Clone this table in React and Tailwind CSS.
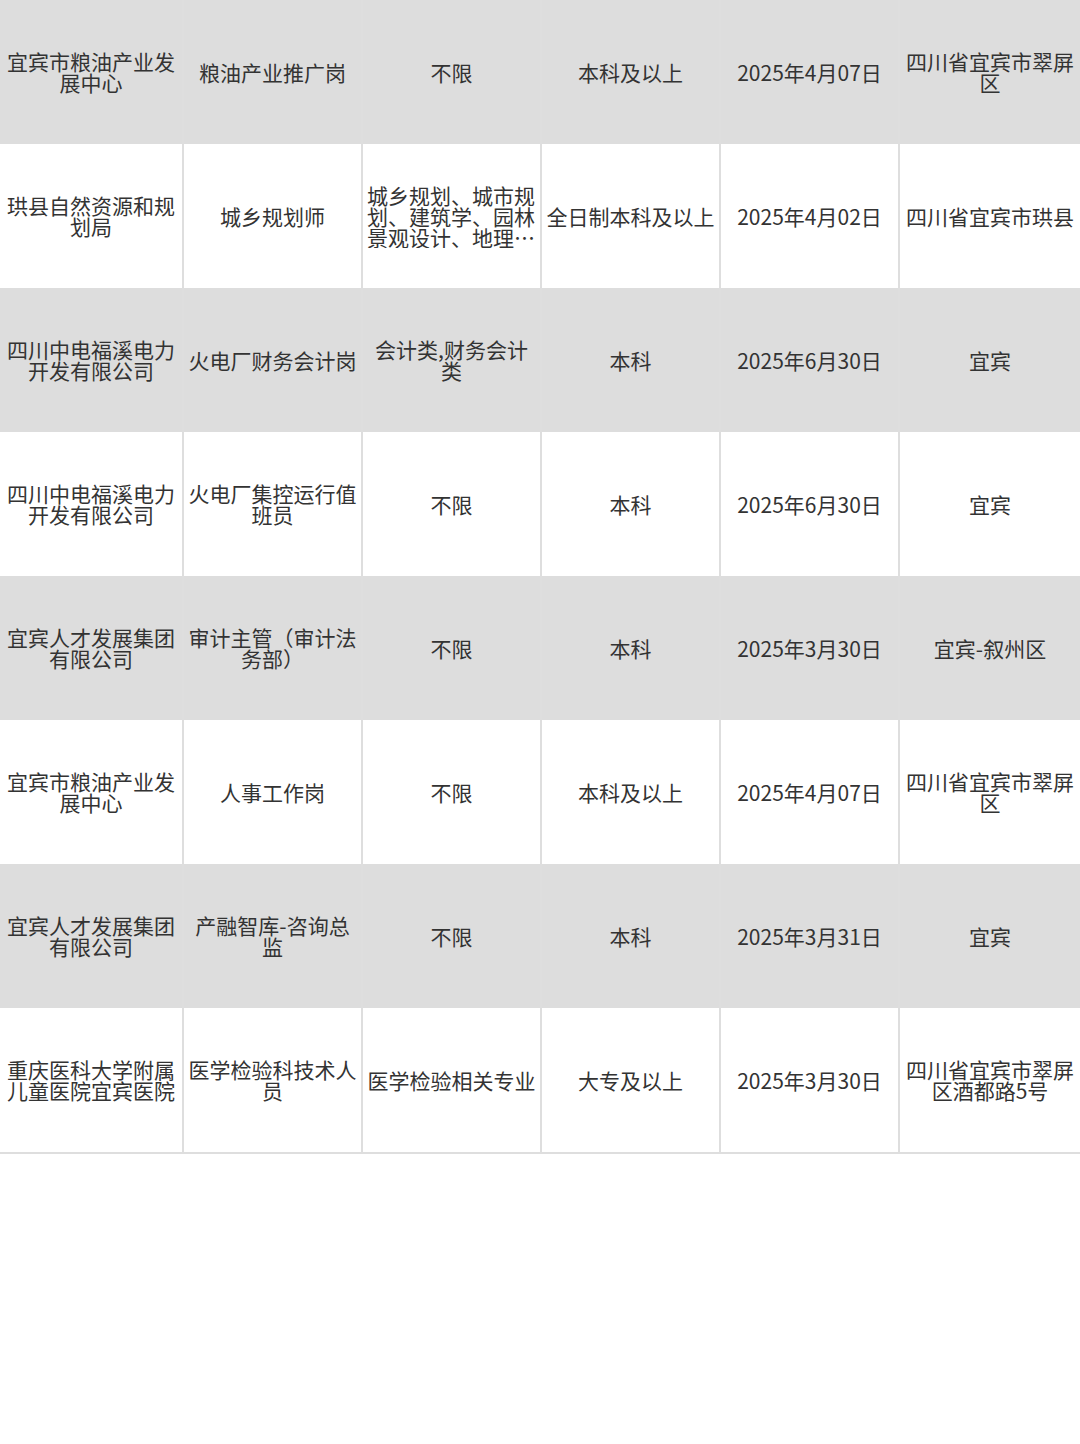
import React from "react";

const rows = [
  ["宜宾市粮油产业发展中心", "粮油产业推广岗", "不限", "本科及以上", "2025年4月07日", "四川省宜宾市翠屏区"],
  ["珙县自然资源和规划局", "城乡规划师", "城乡规划、城市规划、建筑学、园林景观设计、地理信息系统等相关专业", "全日制本科及以上", "2025年4月02日", "四川省宜宾市珙县"],
  ["四川中电福溪电力开发有限公司", "火电厂财务会计岗", "会计类,财务会计类", "本科", "2025年6月30日", "宜宾"],
  ["四川中电福溪电力开发有限公司", "火电厂集控运行值班员", "不限", "本科", "2025年6月30日", "宜宾"],
  ["宜宾人才发展集团有限公司", "审计主管（审计法务部）", "不限", "本科", "2025年3月30日", "宜宾-叙州区"],
  ["宜宾市粮油产业发展中心", "人事工作岗", "不限", "本科及以上", "2025年4月07日", "四川省宜宾市翠屏区"],
  ["宜宾人才发展集团有限公司", "产融智库-咨询总监", "不限", "本科", "2025年3月31日", "宜宾"],
  ["重庆医科大学附属儿童医院宜宾医院", "医学检验科技术人员", "医学检验相关专业", "大专及以上", "2025年3月30日", "四川省宜宾市翠屏区酒都路5号"],
];

const Cell = ({ text, first, clamp }) => (
  <div
    className={`flex h-full items-center justify-center px-1 text-center ${
      first ? "" : "border-l-2 border-[#dedede]"
    }`}
  >
    <p
      className={`break-all text-[21px] leading-[21px] text-[#333] ${
        clamp ? "line-clamp-3 text-left" : ""
      }`}
    >
      {text}
    </p>
  </div>
);

export default function App() {
  return (
    <div
      className="min-h-[1444px] w-[1080px] bg-white"
      style={{ fontFamily: '"Noto Sans CJK SC", "Noto Sans", sans-serif' }}
    >
      <div className="border-b-2 border-[#dedede]">
        {rows.map((row, i) => (
          <div
            key={i}
            className={`grid h-[144px] grid-cols-[182px_179px_179px_179px_179px_182px] ${
              i % 2 === 0 ? "bg-[#dddddd]" : "bg-white"
            }`}
          >
            {row.map((text, j) => (
              <Cell key={j} text={text} first={j === 0} clamp={text.length > 24} />
            ))}
          </div>
        ))}
      </div>
    </div>
  );
}
